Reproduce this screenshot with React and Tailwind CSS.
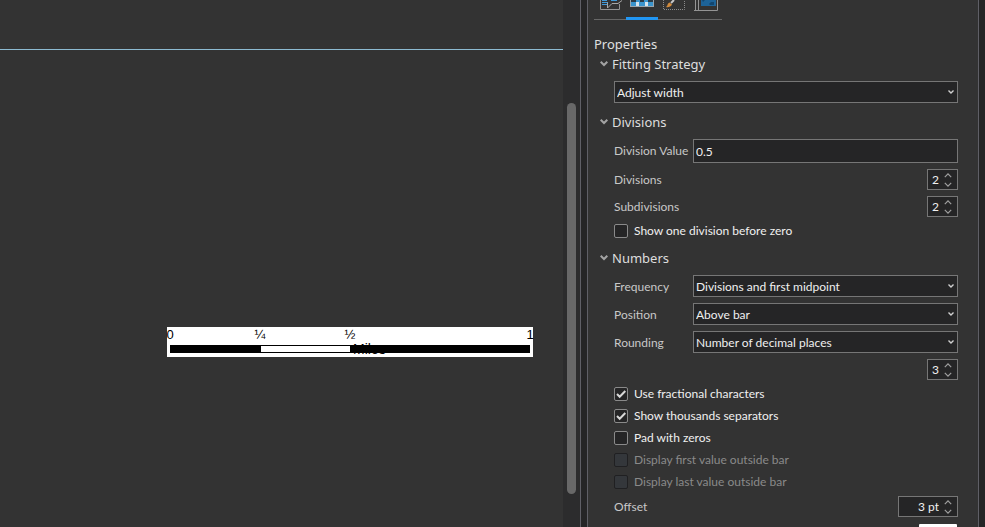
import { useState } from 'react';

const FIELD = 'border border-[#767676] bg-[#252526] text-[12px] text-[#f0f0f0]';

function Chevron({ className, up = false }) {
  return (
    <svg className={className} viewBox="0 0 10 6" fill="none" stroke="currentColor" strokeWidth="1.5" aria-hidden="true">
      <path d={up ? 'M1 5 L5 1 L9 5' : 'M1 1 L5 5 L9 1'} />
    </svg>
  );
}

function Section({ title, children }) {
  const [open, setOpen] = useState(true);
  return (
    <section>
      <h3>
        <button
          type="button"
          aria-expanded={open}
          onClick={() => setOpen(!open)}
          className="flex h-5 items-center gap-1 pl-1.5 font-['Noto_Sans','Open_Sans',sans-serif] text-[13px] text-[#dedede]"
        >
          <svg className="size-2 text-[#a4a4a4]" viewBox="0 0 8 8" fill="none" stroke="currentColor" strokeWidth="2" aria-hidden="true">
            <path d="M0.7 1.7 L4 5 L7.3 1.7" />
          </svg>
          {title}
        </button>
      </h3>
      {open && <div className="flex flex-col pl-5">{children}</div>}
    </section>
  );
}

function Select({ id, label, options }) {
  return (
    <div className="relative flex-1">
      <select id={id} aria-label={label} className={`block h-[22px] w-full appearance-none pt-0.5 pr-5 pl-0.5 ${FIELD}`}>
        {options.map((o) => (
          <option key={o}>{o}</option>
        ))}
      </select>
      <svg className="pointer-events-none absolute top-2 right-[3px] h-1.5 w-2 text-[#d0d0d0]" viewBox="0 0 8 6" fill="none" stroke="currentColor" strokeWidth="1.4" aria-hidden="true">
        <path d="M1.5 1.5 L4 4 L6.5 1.5" />
      </svg>
    </div>
  );
}

function SelectRow({ id, label, options }) {
  return (
    <div className="flex items-center">
      <label htmlFor={id} className="w-[79px] pt-0.5 text-[#c8c8c8]">{label}</label>
      <Select id={id} options={options} />
    </div>
  );
}

function Spinner({ id, label, value, wide = false }) {
  return (
    <div className={`flex h-[21px] items-center ${wide ? 'w-[60px]' : 'w-[31px]'} ${FIELD}`}>
      <input id={id} aria-label={label} defaultValue={value} className="h-full w-0 flex-1 bg-transparent text-right outline-none" />
      <span className="flex w-[18px] flex-col items-center gap-1 text-[#a0a0a0]">
        <button type="button" aria-label="Increase"><Chevron up className="h-[5px] w-2" /></button>
        <button type="button" aria-label="Decrease"><Chevron className="h-[5px] w-2" /></button>
      </span>
    </div>
  );
}

function SpinnerRow({ id, label, value, wide }) {
  return (
    <div className="flex items-center justify-between">
      <label htmlFor={id} className="text-[#c8c8c8]">{label}</label>
      <Spinner id={id} value={value} wide={wide} />
    </div>
  );
}

function Check({ label, checked = false, disabled = false }) {
  return (
    <label className="flex h-[22px] items-center gap-1.5 text-[#f0f0f0] has-disabled:text-[#8a8a8a]">
      <span className="relative size-3.5">
        <input
          type="checkbox"
          defaultChecked={checked}
          disabled={disabled}
          className="peer block size-3.5 appearance-none rounded-[2px] border border-[#8a8a8a] bg-[#252526] disabled:border-[#202022] disabled:bg-[#34373b]"
        />
        <svg className="pointer-events-none absolute inset-0 hidden size-3.5 text-[#d8d8d8] peer-checked:block" viewBox="0 0 14 14" fill="none" stroke="currentColor" strokeWidth="2" aria-hidden="true">
          <path d="M3 7 L5.7 9.8 L11.3 4" />
        </svg>
      </span>
      {label}
    </label>
  );
}

function Tabs() {
  return (
    <nav className="flex h-5 w-32 border-b border-[#686868]" aria-label="Element panes">
      <button type="button" aria-label="Options" className="flex h-[17px] w-8 items-start">
        <svg className="h-3 w-8" viewBox="0 0 32 12" fill="none" aria-hidden="true">
          <path d="M6.5 0V9.5H25.5V4" stroke="#949494" />
          <path d="M8 0.5H13M8 2.5H14M8 4.5H13M17 0.5H23" stroke="#3f9bdc" />
          <path d="M13.5 2.5V8L18 3.5H24L28 0.5" stroke="#a8a8a8" />
        </svg>
      </button>
      <button type="button" aria-label="Properties" className="flex h-5 w-8 items-start border-b-[3px] border-[#2196f3]">
        <svg className="h-[17px] w-8" viewBox="0 0 32 17" aria-hidden="true">
          <path d="M4 0H28V7H4Z" fill="#9aa5ac" />
          <path d="M5 2H10V6H5ZM22 2H27V6H22ZM10 0H14V2H10ZM18 0H22V2H18ZM13 2H19V6H13Z" fill="#3a94cc" />
          <path d="M5 0H10V2H5ZM14 0H18V2H14ZM22 0H27V2H22Z" fill="#2b3a44" />
          <path d="M10 2H13V6H10ZM19 2H22V6H19Z" fill="#d6e4ec" />
        </svg>
      </button>
      <button type="button" aria-label="Display" className="flex h-[17px] w-8 items-start">
        <svg className="h-3 w-8" viewBox="0 0 32 12" fill="none" aria-hidden="true">
          <path d="M5.5 0V9.5H26.5V0" stroke="#8c8c8c" strokeDasharray="1 1" />
          <path d="M8 7 C10 6 9 3.5 11.5 2.5 L14 4.5 C13 7 10 7.5 8 7Z" fill="#d08a3c" />
          <path d="M13 3 L16 0" stroke="#c8c8c8" strokeWidth="2" />
        </svg>
      </button>
      <button type="button" aria-label="Placement" className="flex h-[17px] w-8 items-start">
        <svg className="h-3 w-8" viewBox="0 0 32 12" fill="none" aria-hidden="true">
          <path d="M5.5 0V10.5M8.5 0V10.5M4 10.5H27.5V0" stroke="#949494" />
          <path d="M11 0H26V6H11Z" fill="#1d6398" />
          <path d="M12 0H15L13 2ZM19 4L21 2H24V5H20Z" fill="#12466f" />
        </svg>
      </button>
    </nav>
  );
}

function ScaleBar() {
  return (
    <figure aria-label="Scale bar" className="absolute top-[327px] left-[167px] h-[30px] w-[366px] bg-white font-['Liberation_Sans',Arial,sans-serif] leading-4 text-black">
      <div className="absolute top-0 left-[3px] h-4 w-[360px] text-[13px]">
        <span className="absolute left-0 -translate-x-1/2">0</span>
        <span className="absolute left-1/4 -translate-x-1/2">¼</span>
        <span className="absolute left-1/2 -translate-x-1/2">½</span>
        <span className="absolute left-full -translate-x-1/2">1</span>
      </div>
      <div className="absolute top-[18px] left-[3px] flex h-2 w-[360px] border border-black">
        <div className="w-1/4 bg-black" />
        <div className="w-1/4 bg-white" />
        <div className="w-1/2 bg-black" />
      </div>
      <span className="absolute top-3.5 left-[186px] text-[14px]">Miles</span>
    </figure>
  );
}

export default function App() {
  return (
    <div className="flex h-screen overflow-hidden bg-[#252526] font-['Lato','Open_Sans',sans-serif] text-[12px] leading-4">
      <main className="relative flex-1 bg-[#333333]">
        <div className="mt-[49px] h-px bg-[#8dbbd2]" />
        <ScaleBar />
      </main>
      <div className="w-[17px] bg-[#2c2c2d] px-1 pt-[103px]">
        <div className="h-[391px] rounded-full bg-[#686868]" />
      </div>
      <div className="w-2 border-x border-[#5f5f66] bg-[#252526]" />
      <aside className="mr-1.5 w-[391px] border-r border-[#5f5f66] bg-[#333333] pr-5 pl-1.5">
        <Tabs />
        <h2 className="mt-3.5 h-5 font-['Noto_Sans','Open_Sans',sans-serif] text-[13px] leading-5 text-[#e0e0e0]">Properties</h2>
        <Section title="Fitting Strategy">
          <div className="flex pt-[7px] pb-[9px]">
            <Select label="Fitting Strategy" options={['Adjust width', 'Adjust division value', 'Adjust number of divisions']} />
          </div>
        </Section>
        <Section title="Divisions">
          <div className="flex items-center pt-[7px]">
            <label htmlFor="division-value" className="w-[79px] text-[#c8c8c8]">Division Value</label>
            <input id="division-value" defaultValue="0.5" className={`h-6 w-0 flex-1 pl-0.5 ${FIELD}`} />
          </div>
          <div className="flex flex-col gap-1.5 pt-1.5 pb-[3px]">
            <SpinnerRow id="divisions" label="Divisions" value="2" />
            <SpinnerRow id="subdivisions" label="Subdivisions" value="2" />
          </div>
          <div className="pb-1.5">
            <Check label="Show one division before zero" />
          </div>
        </Section>
        <Section title="Numbers">
          <div className="flex flex-col gap-1.5 pt-[7px] pb-[3px]">
            <SelectRow id="frequency" label="Frequency" options={['Divisions and first midpoint', 'Divisions', 'No numbers']} />
            <SelectRow id="position" label="Position" options={['Above bar', 'Below bar']} />
            <SelectRow id="rounding" label="Rounding" options={['Number of decimal places', 'Number of significant digits']} />
            <div className="flex justify-end">
              <Spinner label="Decimal places" value="3" />
            </div>
          </div>
          <Check label="Use fractional characters" checked />
          <Check label="Show thousands separators" checked />
          <Check label="Pad with zeros" />
          <Check label="Display first value outside bar" disabled />
          <Check label="Display last value outside bar" disabled />
          <div className="pt-[3px] pb-[7px]">
            <SpinnerRow id="offset" label="Offset" value="3 pt" wide />
          </div>
          <button type="button" aria-label="Symbol" className="mr-px h-5 w-[38px] self-end rounded-[1px] bg-white" />
        </Section>
      </aside>
    </div>
  );
}
